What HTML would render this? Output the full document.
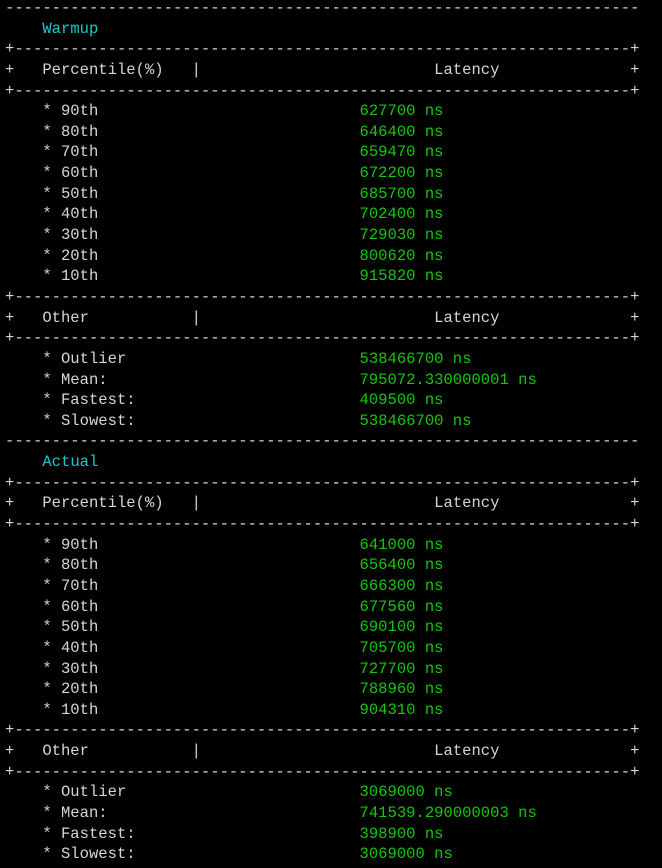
<!DOCTYPE html>
<html><head><meta charset="utf-8"><style>
html,body{margin:0;padding:0;background:#000;width:662px;height:868px;overflow:hidden}
pre{margin:0;position:absolute;left:5px;top:-2px;font-family:"Liberation Mono",monospace;font-size:15.55px;line-height:20.64px;color:#d6d6d6}
.c{color:#1cc8c8}.g{color:#16c60c}
.l{display:inline-block;width:38ch}
</style></head><body><pre>--------------------------------------------------------------------
    <span class="c">Warmup</span>
+------------------------------------------------------------------+
+   Percentile(%)   |                         Latency              +
+------------------------------------------------------------------+
<span class="l">    * 90th</span><span class="g">627700 ns</span>
<span class="l">    * 80th</span><span class="g">646400 ns</span>
<span class="l">    * 70th</span><span class="g">659470 ns</span>
<span class="l">    * 60th</span><span class="g">672200 ns</span>
<span class="l">    * 50th</span><span class="g">685700 ns</span>
<span class="l">    * 40th</span><span class="g">702400 ns</span>
<span class="l">    * 30th</span><span class="g">729030 ns</span>
<span class="l">    * 20th</span><span class="g">800620 ns</span>
<span class="l">    * 10th</span><span class="g">915820 ns</span>
+------------------------------------------------------------------+
+   Other           |                         Latency              +
+------------------------------------------------------------------+
<span class="l">    * Outlier</span><span class="g">538466700 ns</span>
<span class="l">    * Mean:</span><span class="g">795072.330000001 ns</span>
<span class="l">    * Fastest:</span><span class="g">409500 ns</span>
<span class="l">    * Slowest:</span><span class="g">538466700 ns</span>
--------------------------------------------------------------------
    <span class="c">Actual</span>
+------------------------------------------------------------------+
+   Percentile(%)   |                         Latency              +
+------------------------------------------------------------------+
<span class="l">    * 90th</span><span class="g">641000 ns</span>
<span class="l">    * 80th</span><span class="g">656400 ns</span>
<span class="l">    * 70th</span><span class="g">666300 ns</span>
<span class="l">    * 60th</span><span class="g">677560 ns</span>
<span class="l">    * 50th</span><span class="g">690100 ns</span>
<span class="l">    * 40th</span><span class="g">705700 ns</span>
<span class="l">    * 30th</span><span class="g">727700 ns</span>
<span class="l">    * 20th</span><span class="g">788960 ns</span>
<span class="l">    * 10th</span><span class="g">904310 ns</span>
+------------------------------------------------------------------+
+   Other           |                         Latency              +
+------------------------------------------------------------------+
<span class="l">    * Outlier</span><span class="g">3069000 ns</span>
<span class="l">    * Mean:</span><span class="g">741539.290000003 ns</span>
<span class="l">    * Fastest:</span><span class="g">398900 ns</span>
<span class="l">    * Slowest:</span><span class="g">3069000 ns</span>
</pre></body></html>
